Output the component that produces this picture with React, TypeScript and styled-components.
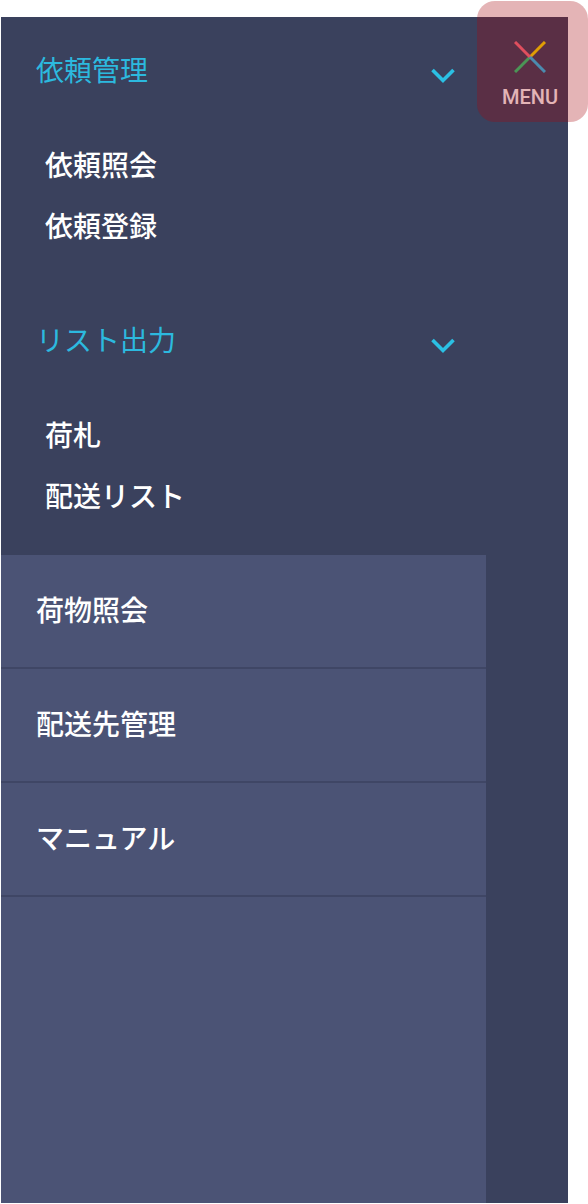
import React, { useState } from "react";
import styled, { createGlobalStyle } from "styled-components";

const GlobalStyle = createGlobalStyle`
  *, *::before, *::after { box-sizing: border-box; }
  body {
    margin: 0;
    background: #fff;
    font-family: "Noto Sans CJK JP", sans-serif;
    font-size: 28px;
    line-height: 36px;
  }
  ul { margin: 0; padding: 0; list-style: none; }
  button { border: 0; background: none; font: inherit; cursor: pointer; }
  a { text-decoration: none; }
`;

const Page = styled.div`
  display: flex;
  min-height: 100vh;
  padding: 17px 20px 1px 1px;
`;

const Drawer = styled.div`
  flex: 1;
  display: grid;
  grid-template-columns: 1fr 82px;
  background: #3a415d;
`;

const Nav = styled.nav`
  display: flex;
  flex-direction: column;
`;

const Groups = styled.div`
  display: flex;
  flex-direction: column;
  gap: 2px;
`;

const GroupHeader = styled.button`
  display: flex;
  align-items: center;
  justify-content: space-between;
  width: 100%;
  height: 107px;
  padding: 0 31px 4px 35px;
  color: #2cb9df;
  text-align: left;
`;

const ChevronIcon = styled.svg<{ $open: boolean }>`
  width: 24px;
  height: 16px;
  margin-top: 14px;
  transform: ${({ $open }) => ($open ? "none" : "rotate(-90deg)")};
`;

const SubList = styled.ul`
  padding: 11px 0 28px;
`;

const SubLink = styled.a`
  display: flex;
  align-items: center;
  height: 61px;
  padding: 0 44px 4px;
  color: #fff;
  font-weight: 500;
`;

const MainList = styled.ul`
  flex: 1;
  background: #4b5375;
`;

const MainLink = styled.a`
  display: flex;
  align-items: center;
  height: 114px;
  padding: 0 35px 4px;
  border-bottom: 2px solid #3f4665;
  color: #fff;
  font-weight: 500;
`;

const MenuButton = styled.button`
  position: relative;
  display: flex;
  flex-direction: column;
  align-items: center;
  align-self: start;
  gap: 12px;
  height: 105px;
  padding: 24px 0 0 6px;
  color: #fff;
  font-family: Roboto, sans-serif;
  font-size: 20px;
  font-weight: 500;
  line-height: 24px;
`;

const Highlight = styled.span`
  position: absolute;
  inset: -16px -20px 0 -9px;
  border-radius: 18px;
  background: rgba(165, 8, 12, 0.3);
`;

const groups = [
  { title: "依頼管理", items: ["依頼照会", "依頼登録"] },
  { title: "リスト出力", items: ["荷札", "配送リスト"] },
];

const mainItems = ["荷物照会", "配送先管理", "マニュアル"];

function Group({ title, items }: { title: string; items: string[] }) {
  const [open, setOpen] = useState(true);
  return (
    <section>
      <GroupHeader type="button" aria-expanded={open} onClick={() => setOpen(!open)}>
        {title}
        <ChevronIcon $open={open} viewBox="0 0 24 16" aria-hidden="true">
          <path d="M1.5 2 12 12.5 22.5 2" fill="none" stroke="#2bc0e4" strokeWidth="3.6" />
        </ChevronIcon>
      </GroupHeader>
      {open && (
        <SubList>
          {items.map((item) => (
            <li key={item}>
              <SubLink href="#">{item}</SubLink>
            </li>
          ))}
        </SubList>
      )}
    </section>
  );
}

function CloseIcon() {
  return (
    <svg width="32" height="32" viewBox="0 0 32 32" fill="none" strokeWidth="3" aria-hidden="true">
      <path d="M1 31 16 16" stroke="#24d376" />
      <path d="M31 1 16 16" stroke="#fae000" />
      <path d="M1 1 16 16" stroke="#fa6f82" />
      <path d="M31 31 16 16" stroke="#24c5f5" />
    </svg>
  );
}

export default function App() {
  return (
    <>
      <GlobalStyle />
      <Page>
        <Drawer>
          <Nav>
            <Groups>
              {groups.map((group) => (
                <Group key={group.title} {...group} />
              ))}
            </Groups>
            <MainList>
              {mainItems.map((item) => (
                <li key={item}>
                  <MainLink href="#">{item}</MainLink>
                </li>
              ))}
            </MainList>
          </Nav>
          <MenuButton type="button">
            <CloseIcon />
            MENU
            <Highlight />
          </MenuButton>
        </Drawer>
      </Page>
    </>
  );
}
